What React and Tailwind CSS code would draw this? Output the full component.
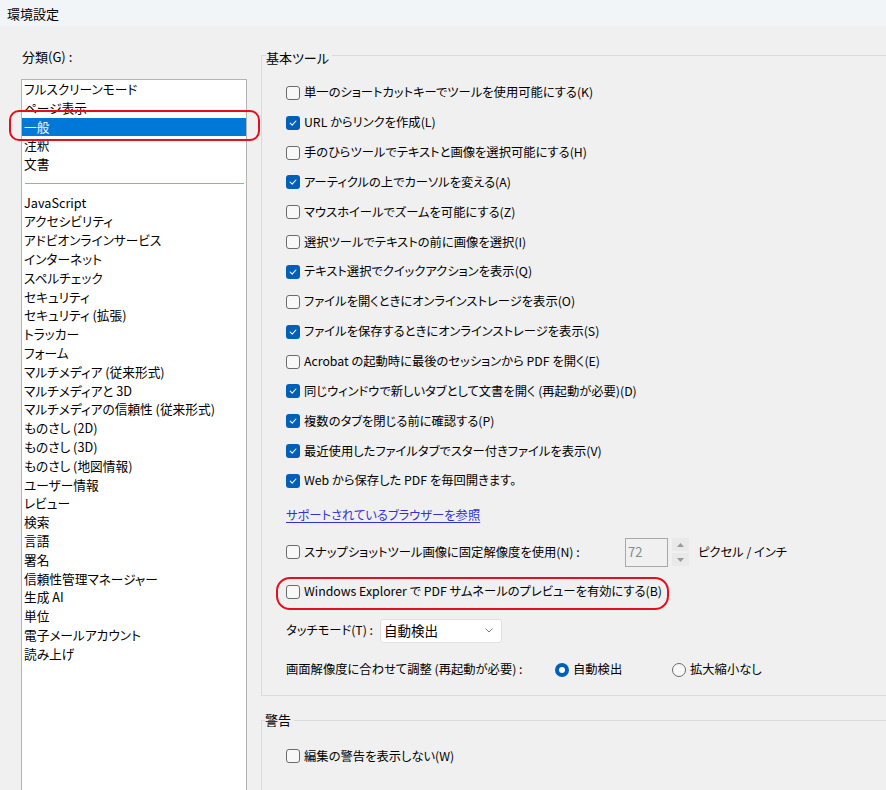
import React from "react";

function Check({ checked }) {
  return checked ? (
    <span className="w-[14px] h-[14px] rounded-[3px] bg-[#005fb8] flex items-center justify-center shrink-0">
      <svg width="10" height="10" viewBox="0 0 10 10">
        <path d="M2.2 5.2 L4.2 7.1 L7.9 3" fill="none" stroke="#ffffff" strokeWidth="1.1" strokeLinecap="round" strokeLinejoin="round" />
      </svg>
    </span>
  ) : (
    <span className="w-[14px] h-[14px] rounded-[3px] border border-[#6b6b6b] bg-[#f8f8f8] shrink-0" />
  );
}

function Radio({ checked }) {
  return checked ? (
    <span className="w-[14px] h-[14px] rounded-full bg-[#005fb8] flex items-center justify-center shrink-0">
      <span className="w-[6px] h-[6px] rounded-full bg-white" />
    </span>
  ) : (
    <span className="w-[14px] h-[14px] rounded-full border border-[#6b6b6b] bg-[#f8f8f8] shrink-0" />
  );
}

const topItems = ["フルスクリーンモード", "ページ表示", "一般", "注釈", "文書"];
const bottomItems = [
  "JavaScript",
  "アクセシビリティ",
  "アドビオンラインサービス",
  "インターネット",
  "スペルチェック",
  "セキュリティ",
  "セキュリティ (拡張)",
  "トラッカー",
  "フォーム",
  "マルチメディア (従来形式)",
  "マルチメディアと 3D",
  "マルチメディアの信頼性 (従来形式)",
  "ものさし (2D)",
  "ものさし (3D)",
  "ものさし (地図情報)",
  "ユーザー情報",
  "レビュー",
  "検索",
  "言語",
  "署名",
  "信頼性管理マネージャー",
  "生成 AI",
  "単位",
  "電子メールアカウント",
  "読み上げ",
];

const checks = [
  ["単一のショートカットキーでツールを使用可能にする(K)", false],
  ["URL からリンクを作成(L)", true],
  ["手のひらツールでテキストと画像を選択可能にする(H)", false],
  ["アーティクルの上でカーソルを変える(A)", true],
  ["マウスホイールでズームを可能にする(Z)", false],
  ["選択ツールでテキストの前に画像を選択(I)", false],
  ["テキスト選択でクイックアクションを表示(Q)", true],
  ["ファイルを開くときにオンラインストレージを表示(O)", false],
  ["ファイルを保存するときにオンラインストレージを表示(S)", true],
  ["Acrobat の起動時に最後のセッションから PDF を開く(E)", false],
  ["同じウィンドウで新しいタブとして文書を開く (再起動が必要)(D)", true],
  ["複数のタブを閉じる前に確認する(P)", true],
  ["最近使用したファイルタブでスター付きファイルを表示(V)", true],
  ["Web から保存した PDF を毎回開きます。", true],
];

export default function App() {
  return (
    <div className="relative w-[886px] h-[790px] overflow-hidden bg-[#f0f0f0] text-[13px] text-[#000] font-['Noto_Sans_CJK_JP',sans-serif] [font-feature-settings:'palt']">
      {/* title bar */}
      <div className="h-[26px] bg-[#f2f5f8] flex items-center pl-[7px] leading-[19px]">環境設定</div>

      <div className="flex">
        {/* left column */}
        <div className="w-[261px] shrink-0 pl-[21px] pt-[21px] leading-[19px] text-[12.7px]">
          <div className="h-[19px] pl-[1px] text-[13px]">分類(G) :</div>
          <div className="mt-[13px] w-[226px] h-[720px] border border-[#b4b4b4] bg-white">
            {topItems.map((t) => (
              <div
                key={t}
                className={
                  t === "一般"
                    ? "h-[18.8px] leading-[18.8px] pl-[2px] bg-[#0078d7] text-white"
                    : "h-[18.8px] leading-[18.8px] pl-[2px]"
                }
              >
                {t}
              </div>
            ))}
            <div className="mt-[9px] mb-[9.6px] ml-[3px] mr-[2px] h-px bg-[#7fb0e0]" />
            {bottomItems.map((t) => (
              <div key={t} className="h-[18.8px] leading-[18.8px] pl-[2px]">
                {t}
              </div>
            ))}
          </div>
        </div>

        {/* right column */}
        <div className="flex-1 min-w-0 leading-[19px] text-[12.3px]">
          <div className="mt-[29px] border-t border-l border-b border-[#dadada] pb-[16px]">
            <div className="-mt-[8px] h-[19px] ml-[4px] w-fit bg-[#f0f0f0] pr-[3px] text-[13px]">基本ツール</div>
            <div className="mt-[11px]">
              {checks.map(([t, c]) => (
                <div key={t} className="flex items-center h-[29.85px] pl-[24px] gap-[4px]">
                  <Check checked={c} />
                  <span>{t}</span>
                </div>
              ))}
            </div>
            <div className="mt-[10.5px] h-[19px] pl-[24px]">
              <span className="text-[#3030d8] underline underline-offset-2">サポートされているブラウザーを参照</span>
            </div>
            <div className="mt-[12px] h-[30px] flex items-center pl-[24px]">
              <Check checked={false} />
              <span className="ml-[4px] w-[321px]">スナップショットツール画像に固定解像度を使用(N) :</span>
              <div className="w-[43px] h-[29px] border border-[#a8a8a8] bg-[#f0f0f0] text-[#8a8a8a] pl-[2px] leading-[25px] text-[13px]">72</div>
              <div className="ml-[4px] w-[17px] h-[28px] flex flex-col gap-[2px]">
                <div className="flex-1 bg-[#e9e9e9] flex items-center justify-center">
                  <svg width="7" height="4" viewBox="0 0 7 4"><path d="M0 4 L3.5 0 L7 4 Z" fill="#9a9a9a" /></svg>
                </div>
                <div className="flex-1 bg-[#e9e9e9] flex items-center justify-center">
                  <svg width="7" height="4" viewBox="0 0 7 4"><path d="M0 0 L3.5 4 L7 0 Z" fill="#9a9a9a" /></svg>
                </div>
              </div>
              <span className="ml-[9px]">ピクセル / インチ</span>
            </div>
            <div className="mt-[9.5px] h-[30px] flex items-center pl-[24px] gap-[4px]">
              <Check checked={false} />
              <span>Windows Explorer で PDF サムネールのプレビューを有効にする(B)</span>
            </div>
            <div className="mt-[12px] h-[24px] flex items-center pl-[24px]">
              <span className="w-[94px]">タッチモード(T) :</span>
              <div className="w-[122px] h-[24px] bg-white border border-[#e0e0e0] rounded-[3px] flex items-center pl-[3px] pr-[8px] justify-between text-[13.5px]">
                <span>自動検出</span>
                <svg width="8" height="5" viewBox="0 0 8 5"><path d="M0.5 0.5 L4 4 L7.5 0.5" fill="none" stroke="#6b6b6b" strokeWidth="0.9" /></svg>
              </div>
            </div>
            <div className="mt-[17.5px] h-[19px] flex items-center pl-[24px]">
              <span className="w-[269px]">画面解像度に合わせて調整 (再起動が必要) :</span>
              <Radio checked={true} />
              <span className="ml-[4px] w-[99px]">自動検出</span>
              <Radio checked={false} />
              <span className="ml-[4px]">拡大縮小なし</span>
            </div>
          </div>

          <div className="mt-[24px] border-t border-l border-[#dadada] h-[100px]">
            <div className="-mt-[11px] h-[19px] ml-[3px] w-fit bg-[#f0f0f0] pr-[3px] text-[13px]">警告</div>
            <div className="mt-[12px] h-[30px] flex items-center pl-[24px] gap-[4px]">
              <Check checked={false} />
              <span>編集の警告を表示しない(W)</span>
            </div>
          </div>
        </div>
      </div>

      {/* red highlight outlines */}
      <div className="absolute left-[9px] top-[110px] w-[251px] h-[31px] border-[2.5px] border-[#e3101c] rounded-[10px]" />
      <div className="absolute left-[276px] top-[577px] w-[393px] h-[33px] border-[2.5px] border-[#e3101c] rounded-[14px]" />
    </div>
  );
}
